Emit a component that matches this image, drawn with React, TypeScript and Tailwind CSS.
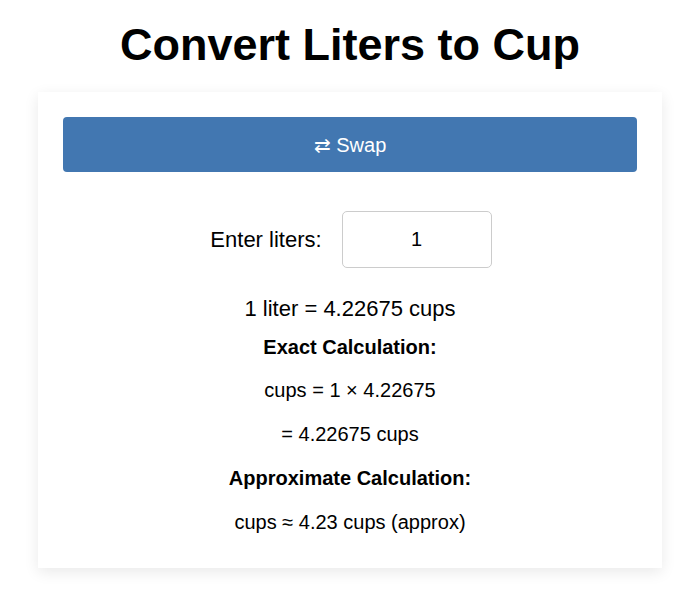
import { useState } from "react";

export default function App() {
  const [liters, setLiters] = useState("1");
  const factor = 4.22675;
  const value = parseFloat(liters) || 0;
  const exact = +(value * factor).toFixed(5);
  const approx = (value * factor).toFixed(2);

  return (
    <div className="min-h-screen bg-white pt-[19px] font-['Liberation_Sans',Arial,sans-serif] text-black">
      <h1 className="text-center text-[45px] font-bold leading-[52px] mb-[21px]">
        Convert Liters to Cup
      </h1>

      <div className="mx-[38px] bg-white px-[25px] pt-[25px] pb-[34px] shadow-[0_4px_14px_rgba(0,0,0,0.09)]">
        <button className="w-full h-[55px] rounded-[4px] bg-[#4277b1] text-white text-[20px]">
          ⇄ Swap
        </button>

        {/* Input row */}
        <div className="mt-[39px] flex items-center justify-center gap-[20px] pl-[2px]">
          <label className="text-[22px]">Enter liters:</label>
          <input
            value={liters}
            onChange={(e) => setLiters(e.target.value)}
            className="w-[150px] h-[57px] rounded-[5px] border border-[#cccccc] text-center text-[20px] outline-none"
          />
        </div>

        <div className="text-center">
          <p className="mt-[28px] text-[22px] leading-[26px]">
            {value} liter = {exact} cups
          </p>
          <p className="mt-[13px] text-[20px] leading-[24px] font-bold">Exact Calculation:</p>
          <p className="mt-[19px] text-[20px] leading-[24px]">
            cups = {value} × {factor}
          </p>
          <p className="mt-[20px] text-[20px] leading-[24px]">= {exact} cups</p>
          <p className="mt-[20px] text-[20px] leading-[24px] font-bold">Approximate Calculation:</p>
          <p className="mt-[20px] text-[20px] leading-[24px]">cups ≈ {approx} cups (approx)</p>
        </div>
      </div>
    </div>
  );
}
